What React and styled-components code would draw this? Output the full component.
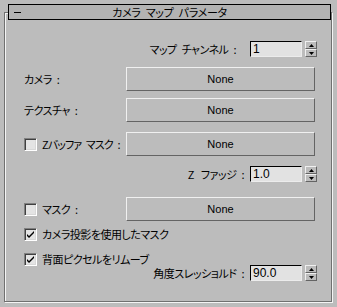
import React from "react";
import styled, { createGlobalStyle } from "styled-components";

const GlobalStyle = createGlobalStyle`
  html, body {
    margin: 0;
    padding: 0;
    background: #bcbcbc;
  }
  body {
    font-family: "Noto Sans CJK JP", sans-serif;
    color: #000;
  }
`;

const Page = styled.div`
  width: 337px;
  height: 307px;
  box-sizing: border-box;
  padding-top: 4px;
  background: #bcbcbc;
  overflow: hidden;
`;

const TitleBar = styled.div`
  position: relative;
  z-index: 1;
  margin-left: 8px;
  width: 323px;
  height: 16px;
  box-sizing: border-box;
  border: 1px solid #000;
  background: #b3b3b3;
  display: grid;
  grid-template-columns: 1fr auto 1fr;
  align-items: center;
  font-size: 11px;
  font-feature-settings: "palt";
  letter-spacing: -0.3px;
  line-height: 14px;
  white-space: pre;
`;

const Collapse = styled.span`
  justify-self: start;
  margin-left: 5px;
  width: 7px;
  height: 1px;
  background: #000;
`;

const Frame = styled.div`
  margin: -8px 0 0 4px;
  width: 328px;
  height: 290px;
  box-sizing: border-box;
  border: 1px solid #707070;
  box-shadow: inset 1px 1px 0 #f4f4f4, 1px 1px 0 #f4f4f4;
  padding: 0 14px 0 19px;
  display: flex;
  flex-direction: column;
`;

const Label = styled.span`
  font-size: 11px;
  font-feature-settings: "palt";
  letter-spacing: ${(p) => p.$ls ?? -0.5}px;
  white-space: pre;
  line-height: 13px;
  margin-right: ${(p) => p.$gap || 0}px;
`;

const ButtonRow = styled.div`
  display: grid;
  grid-template-columns: 102px 189px;
  align-items: center;
  height: 24px;
  margin-top: ${(p) => p.$mt}px;
`;

const SpinnerRow = styled.div`
  display: flex;
  justify-content: flex-end;
  align-items: center;
  height: 16px;
  margin-top: ${(p) => p.$mt}px;
`;

const CheckRow = styled.div`
  display: flex;
  align-items: center;
  gap: 5px;
  height: 13px;
  margin-top: ${(p) => p.$mt}px;
`;

const MapButton = styled.div`
  height: 24px;
  box-sizing: border-box;
  border: 1px solid;
  border-color: #f0f0f0 #646464 #646464 #f0f0f0;
  display: flex;
  align-items: center;
  justify-content: center;
  font-family: "Liberation Sans", sans-serif;
  font-size: 11px;
`;

const NumberField = styled.div`
  width: 52px;
  height: 16px;
  box-sizing: border-box;
  border: 1px solid;
  border-color: #000 #ececec #ececec #000;
  background: #e2e2e2;
  padding-left: 2px;
  font-family: "Liberation Sans", sans-serif;
  font-size: 12px;
  line-height: 14px;
  margin-right: 3px;
`;

const Spin = styled.div`
  width: 12px;
  height: 16px;
  display: flex;
  flex-direction: column;
`;

const SpinHalf = styled.div`
  flex: 1;
  box-sizing: border-box;
  border: 1px solid;
  border-color: #f0f0f0 #646464 #646464 #f0f0f0;
  display: flex;
  align-items: center;
  justify-content: center;
`;

const Box = styled.div`
  width: 13px;
  height: 13px;
  box-sizing: border-box;
  border: 1px solid;
  border-color: #808080 #fff #fff #808080;
  box-shadow: inset 1px 1px 0 #404040, inset -1px -1px 0 #d8d8d8;
  background: #e4e4e4;
  display: flex;
  align-items: center;
  justify-content: center;
  flex-shrink: 0;
`;

const CheckCell = styled.div`
  display: flex;
  align-items: center;
  gap: 5px;
`;

const Arrow = ({ down }) => (
  <svg width="5" height="3" viewBox="0 0 5 3">
    <polygon points={down ? "0,0 5,0 2.5,3" : "0,3 5,3 2.5,0"} fill="#000" />
  </svg>
);

const Spinner = ({ value }) => (
  <>
    <NumberField>{value}</NumberField>
    <Spin>
      <SpinHalf>
        <Arrow />
      </SpinHalf>
      <SpinHalf>
        <Arrow down />
      </SpinHalf>
    </Spin>
  </>
);

const CheckBox = ({ checked }) => (
  <Box>
    {checked && (
      <svg width="7" height="7" viewBox="0 0 7 7">
        <path d="M0 3 L2 5 L7 0 L7 2 L2 7 L0 5 Z" fill="#000" />
      </svg>
    )}
  </Box>
);

const sp = "\u2002";

export default function App() {
  return (
    <Page>
      <GlobalStyle />
      <TitleBar>
        <Collapse />
        <span>{`カメラ${sp}マップ${sp}パラメータ`}</span>
        <span />
      </TitleBar>
      <Frame>
        <SpinnerRow $mt={28}>
          <Label $gap={14}>{`マップ${sp}チャンネル${sp}:`}</Label>
          <Spinner value="1" />
        </SpinnerRow>
        <ButtonRow $mt={10}>
          <Label>{`カメラ${sp}:`}</Label>
          <MapButton>None</MapButton>
        </ButtonRow>
        <ButtonRow $mt={7}>
          <Label>{`テクスチャ${sp}:`}</Label>
          <MapButton>None</MapButton>
        </ButtonRow>
        <ButtonRow $mt={10}>
          <CheckCell>
            <CheckBox />
            <Label $ls={-0.9}>{`Zバッファ${sp}マスク${sp}:`}</Label>
          </CheckCell>
          <MapButton>None</MapButton>
        </ButtonRow>
        <SpinnerRow $mt={10}>
          <Label $gap={6}>{`Z${sp} ファッジ${sp}:`}</Label>
          <Spinner value="1.0" />
        </SpinnerRow>
        <ButtonRow $mt={15}>
          <CheckCell>
            <CheckBox />
            <Label>{`マスク${sp}:`}</Label>
          </CheckCell>
          <MapButton>None</MapButton>
        </ButtonRow>
        <CheckRow $mt={7}>
          <CheckBox checked />
          <Label>カメラ投影を使用したマスク</Label>
        </CheckRow>
        <CheckRow $mt={12}>
          <CheckBox checked />
          <Label>背面ピクセルをリムーブ</Label>
        </CheckRow>
        <SpinnerRow $mt={-1}>
          <Label $gap={6}>{`角度スレッショルド${sp}:`}</Label>
          <Spinner value="90.0" />
        </SpinnerRow>
      </Frame>
    </Page>
  );
}
